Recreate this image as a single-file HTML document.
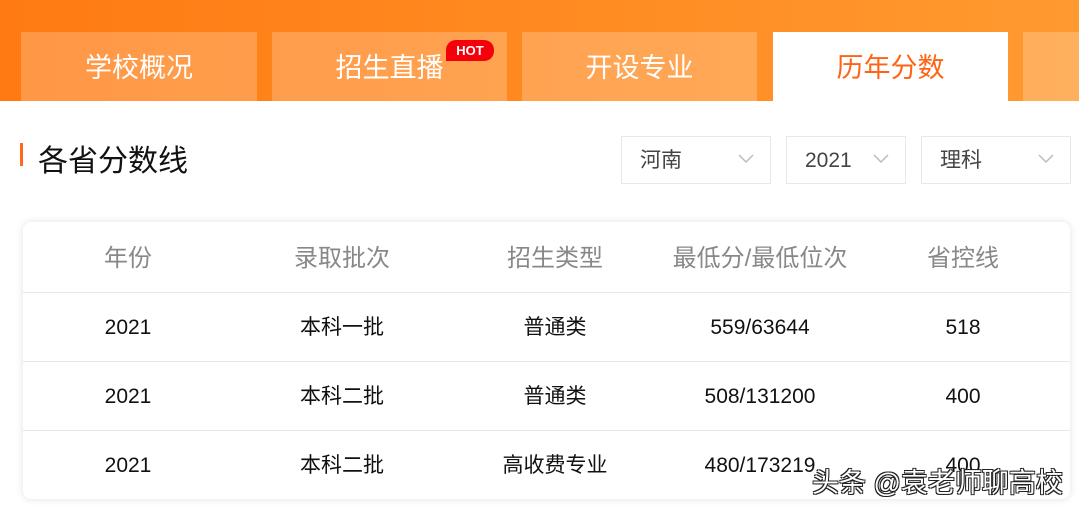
<!DOCTYPE html>
<html><head><meta charset="utf-8"><style>
*{margin:0;padding:0;box-sizing:border-box}
body{width:1079px;height:507px;overflow:hidden;background:#fff;font-family:"Liberation Sans","Noto Sans CJK SC",sans-serif;position:relative}
.hdr{position:absolute;left:0;top:0;width:1079px;height:101px;background:linear-gradient(90deg,#ff7a12,#ff9a30)}
.tab{position:absolute;top:32px;height:69px;color:#fff;font-size:27px;text-align:center;line-height:72px;background:rgba(255,255,255,0.22)}
.tab.act{background:#fff;color:#ff6414}
.hot{position:absolute;left:446px;top:40px;width:48px;height:21px;background:#f5000a;border-radius:10px 10px 10px 0;color:#fff;font-size:13px;font-weight:bold;text-align:center;line-height:21px}
.bar{position:absolute;left:20px;top:143px;width:3px;height:23px;background:#ff6a1a}
.title{position:absolute;left:38px;top:136px;font-size:30px;color:#111}
.sel{position:absolute;top:136px;height:48px;border:1px solid #e8e8e8;font-size:21px;color:#444;line-height:48px;padding-left:18px}
.sel svg{position:absolute;right:16px;top:17px}
.card{position:absolute;left:23px;top:222px;width:1047px;height:277px;border-radius:8px;box-shadow:0 0 8px rgba(0,0,0,0.12);background:#fff}
.row{position:absolute;left:0;width:1047px;height:69px;border-bottom:1px solid #e8e8e8}
.c{position:absolute;top:0;line-height:69px;transform:translateX(-50%);white-space:nowrap;font-size:21px;color:#111}
.h .c{font-size:24px;color:#888}
.wm{position:absolute;left:812px;top:461px;font-size:27px;color:#fff;text-shadow:-1px -1px 0 #222,1px -1px 0 #222,-1px 1px 0 #222,1px 1px 0 #222}
</style></head><body>
<div class="hdr"></div>
<div class="tab" style="left:21px;width:236px">学校概况</div>
<div class="tab" style="left:272px;width:235px">招生直播</div>
<div class="hot">HOT</div>
<div class="tab" style="left:522px;width:235px">开设专业</div>
<div class="tab act" style="left:773px;width:235px">历年分数</div>
<div class="tab" style="left:1023px;width:80px"></div>
<div class="bar"></div><div class="title">各省分数线</div>
<div class="sel" style="left:621px;width:150px">河南<svg width="16" height="10"><path d="M1 1L8 8L15 1" stroke="#bbb" stroke-width="1.5" fill="none"/></svg></div>
<div class="sel" style="left:786px;width:120px">2021<svg width="16" height="10"><path d="M1 1L8 8L15 1" stroke="#bbb" stroke-width="1.5" fill="none"/></svg></div>
<div class="sel" style="left:921px;width:150px">理科<svg width="16" height="10"><path d="M1 1L8 8L15 1" stroke="#bbb" stroke-width="1.5" fill="none"/></svg></div>
<div class="card">
<div class="row h" style="top:0;height:71px"><span class="c" style="left:105px;line-height:74px">年份</span><span class="c" style="left:319px;line-height:74px">录取批次</span><span class="c" style="left:532px;line-height:74px">招生类型</span><span class="c" style="left:737px;line-height:74px">最低分/最低位次</span><span class="c" style="left:940px;line-height:74px">省控线</span></div>
<div class="row" style="top:71px"><span class="c" style="left:105px">2021</span><span class="c" style="left:319px">本科一批</span><span class="c" style="left:532px">普通类</span><span class="c" style="left:737px">559/63644</span><span class="c" style="left:940px">518</span></div>
<div class="row" style="top:140px"><span class="c" style="left:105px">2021</span><span class="c" style="left:319px">本科二批</span><span class="c" style="left:532px">普通类</span><span class="c" style="left:737px">508/131200</span><span class="c" style="left:940px">400</span></div>
<div class="row" style="top:209px;border:none"><span class="c" style="left:105px">2021</span><span class="c" style="left:319px">本科二批</span><span class="c" style="left:532px">高收费专业</span><span class="c" style="left:737px">480/173219</span><span class="c" style="left:940px">400</span></div>
</div>
<div class="wm">头条 @袁老师聊高校</div>
</body></html>
